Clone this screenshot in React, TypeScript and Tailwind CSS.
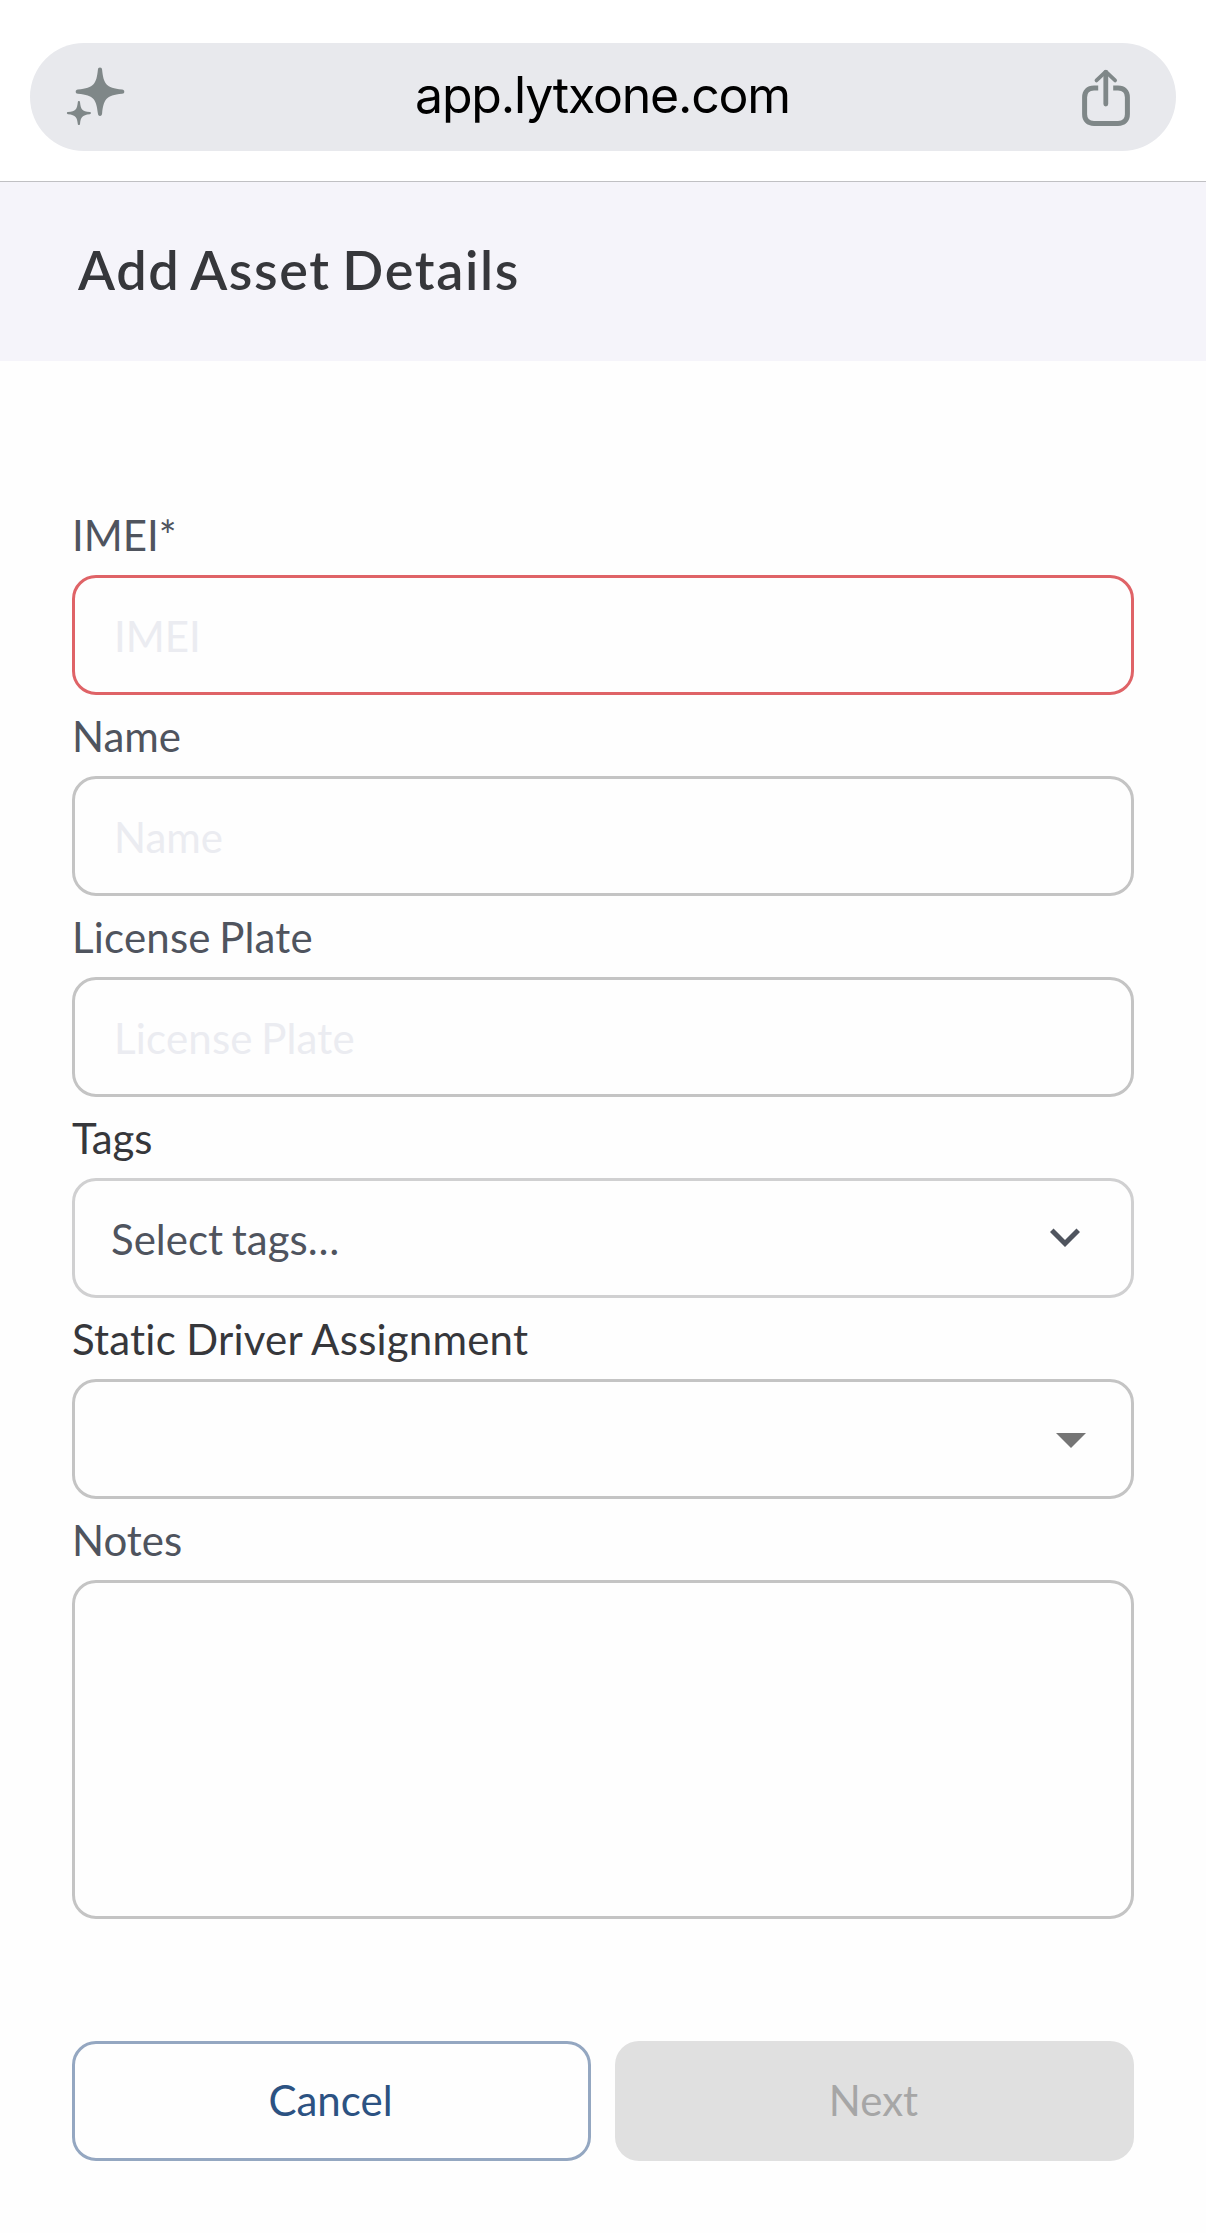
import type { ReactNode } from "react";
import { MdArrowDropDown, MdExpandMore } from "react-icons/md";

const SparkleIcon = () => (
  <svg width="60" height="60" viewBox="0 0 60 60" fill="#7f8788" className="shrink-0">
    <path d="M34 1.5C35.4 1.5 35.9 2.4 36.1 3.8C37.6 17.4 39.6 22.2 56.1 23.6C57.6 23.8 58.3 24.4 58.3 25.7C58.3 27 57.6 27.6 56.1 27.8C39.6 29.2 37.6 34 36.1 47.6C35.9 49 35.4 49.9 34 49.9C32.6 49.9 32.1 49 31.9 47.6C30.4 34 28.4 29.2 11.9 27.8C10.4 27.6 9.7 27 9.7 25.7C9.7 24.4 10.4 23.8 11.9 23.6C28.4 22.2 30.4 17.4 31.9 3.8C32.1 2.4 32.6 1.5 34 1.5Z" transform="translate(0 -1)" />
    <path d="M12.9 35.1C13.6 35.1 13.9 35.5 14 36.2C14.7 43 15.9 45.2 23.8 46C24.5 46.1 24.9 46.4 24.9 47.1C24.9 47.8 24.5 48.1 23.8 48.2C15.9 49 14.7 51.2 14 58C13.9 58.7 13.6 59.1 12.9 59.1C12.2 59.1 11.9 58.7 11.8 58C11.1 51.2 9.9 49 2 48.2C1.3 48.1 0.9 47.8 0.9 47.1C0.9 46.4 1.3 46.1 2 46C9.9 45.2 11.1 43 11.8 36.2C11.9 35.5 12.2 35.1 12.9 35.1Z" transform="translate(0 -1)" />
  </svg>
);

const ShareIcon = () => (
  <svg width="48" height="60" viewBox="0 0 48 60" fill="none" stroke="#7f8788" className="shrink-0">
    <path d="M16.2 21H12C6 21 2.6 24.4 2.6 30.2V47.2C2.6 53 6 56.4 12 56.4H36C42 56.4 45.4 53 45.4 47.2V30.2C45.4 24.4 42 21 36 21H31.2" strokeWidth="5" />
    <path d="M23.8 5.4V37" strokeWidth="4.8" strokeLinecap="round" />
    <path d="M14.5 13.4L23.8 4.7L33.1 13.4" strokeWidth="3.8" strokeLinecap="round" strokeLinejoin="round" />
  </svg>
);

type FieldProps = {
  label: string;
  labelClass?: string;
  children: ReactNode;
};

const Field = ({ label, labelClass = "text-[#4f545e]", children }: FieldProps) => (
  <label className="block">
    <span className={`block h-[81px] leading-[83px] ${labelClass}`}>{label}</span>
    {children}
  </label>
);

const textInputs = [
  { label: "IMEI*", placeholder: "IMEI", border: "border-[#df6367]", spacing: "" },
  { label: "Name", placeholder: "Name", border: "border-[#c4c4c4]", spacing: "" },
  {
    label: "License Plate",
    placeholder: "License Plate",
    border: "border-[#c4c4c4]",
    spacing: "tracking-[0.2px] [word-spacing:-2.5px]"
  }
];

export default function App() {
  return (
    <div className="flex h-[2233px] w-[1206px] flex-col overflow-hidden bg-[#fefefe] font-['Lato',sans-serif] text-[42px] [font-variant-ligatures:none]">
      <div className="h-[182px] border-b border-[#c0c0c3] bg-white px-[30px] pt-[43px]">
        <div className="flex h-[108px] items-center justify-between rounded-full bg-[#e8e9ed] pr-[46px] pl-[36px]">
          <SparkleIcon />
          <span className="pr-[3px] pb-[5px] font-['Inter',sans-serif] text-[50px] leading-none tracking-[-1.2px] text-black">
            app.lytxone.com
          </span>
          <ShareIcon />
        </div>
      </div>

      <header className="flex h-[179px] items-center bg-[#f5f4fa] px-[78px] pb-1">
        <h1 className="text-[54px] leading-none font-semibold tracking-[1.65px] text-[#36373b] [word-spacing:-3.5px]">
          Add Asset Details
        </h1>
      </header>

      <form className="px-[72px] pt-[133px]">
        {textInputs.map((input) => (
          <Field key={input.label} label={input.label} labelClass={`text-[#4f545e] ${input.spacing}`}>
            <input
              placeholder={input.placeholder}
              className={`block h-[120px] w-full rounded-[24px] border-[3px] px-[39px] pt-0.5 text-[#36373b] placeholder:text-[#ebecf1] ${input.border} ${input.spacing}`}
            />
          </Field>
        ))}

        <Field label="Tags" labelClass="text-[#36373b] tracking-[-0.2px]">
          <div className="flex h-[120px] items-center justify-between rounded-[24px] border-[3px] border-[#d0d0d1] px-[36px] text-[#4f545e]">
            <span className="pt-0.5 [word-spacing:-2px]">Select tags…</span>
            <MdExpandMore size={60} className="mb-0.5" />
          </div>
        </Field>

        <Field label="Static Driver Assignment" labelClass="text-[#36373b] tracking-[0.2px] [word-spacing:-0.5px]">
          <div className="flex h-[120px] items-center justify-end rounded-[24px] border-[3px] border-[#c4c4c4] pr-[24px]">
            <MdArrowDropDown size={72} color="#757575" />
          </div>
        </Field>

        <Field label="Notes">
          <textarea className="block h-[339px] w-full resize-none rounded-[24px] border-[3px] border-[#c4c4c4] p-[39px]" />
        </Field>

        <div className="mt-[122px] grid grid-cols-2 gap-6">
          <button
            type="button"
            className="h-[120px] rounded-[24px] border-[3px] border-[#94a7c1] pr-0.5 pb-0.5 text-[#2c5282]"
          >
            Cancel
          </button>
          <button
            type="button"
            disabled
            className="h-[120px] rounded-[24px] bg-[#e0e0e0] pr-0.5 pb-0.5 text-[#a6a6a6]"
          >
            Next
          </button>
        </div>
      </form>
    </div>
  );
}
